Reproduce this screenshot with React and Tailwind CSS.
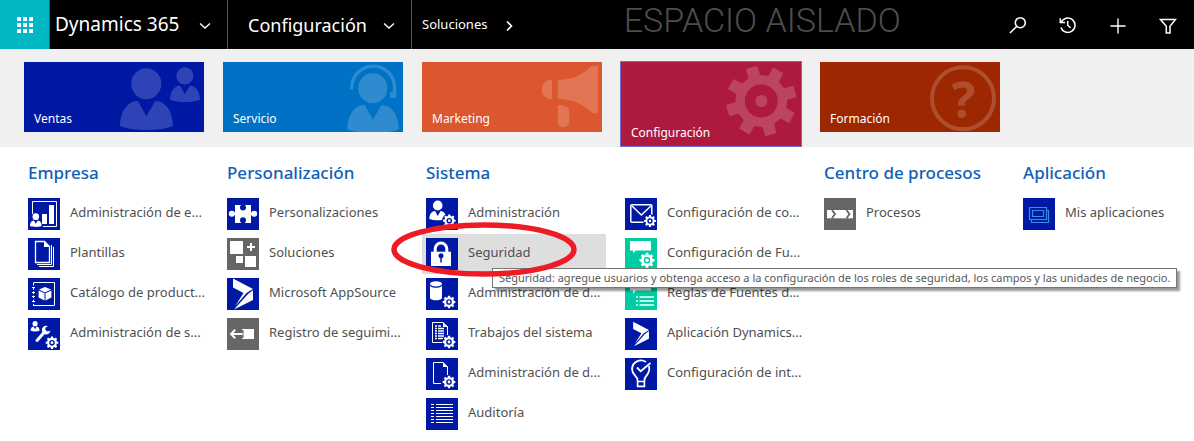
import React from "react";

function gearPath(cx, cy, outer, root, teeth, startDeg) {
  const step = (Math.PI * 2) / teeth;
  const start = (startDeg * Math.PI) / 180;
  const points = [];
  for (let i = 0; i < teeth; i++) {
    const a = start + i * step;
    const corners = [
      [root, a - step * 0.3],
      [outer, a - step * 0.21],
      [outer, a + step * 0.21],
      [root, a + step * 0.3],
    ];
    for (const [r, t] of corners) {
      points.push(`${(cx + r * Math.cos(t)).toFixed(2)} ${(cy + r * Math.sin(t)).toFixed(2)}`);
    }
  }
  return `M${points.join("L")}Z`;
}

function Gear({ cx = 23, cy = 24, r = 6.4, bg = "#0019a5" }) {
  return (
    <>
      <circle cx={cx} cy={cy} r={r + 0.8} fill={bg} />
      <path d={gearPath(cx, cy, r, r * 0.78, 8, -90)} fill="#fff" />
      <circle cx={cx} cy={cy} r={r * 0.33} fill="none" stroke={bg} strokeWidth="1.4" />
    </>
  );
}

const BODY = "M18 0L26.3 15.3L35.3 0C47 0 53 13 53 25C46 28 36 29 26.5 29C17 29 7 28 0 25C0 13 6 0 18 0Z";

function Person({ x, y, s }) {
  return (
    <g transform={`translate(${x} ${y}) scale(${s})`} fill="#fff">
      <ellipse cx="26.3" cy="-17.3" rx="15" ry="15.5" />
      <path d={BODY} />
    </g>
  );
}

const DynamicsLogo = () => (
  <g fill="#fff">
    <path d="M6 0.5L26 11L19.5 15L8 28.5L16.5 15L6 9.5Z" />
    <path d="M26 12.2V22L7 31.5L21 16Z" />
  </g>
);

const icons = {
  company: (
    <>
      <path d="M4.5 16V3.5H28.5V28.5H15" fill="none" stroke="#fff" />
      <path d="M14 16H19V26H14ZM21 7H26V26H21Z" fill="#fff" />
      <Person x={2} y={22.5} s={0.22} />
    </>
  ),
  templates: (
    <>
      <path d="M7.5 3.5H16.5L21.5 8.5V24.5H7.5Z" fill="none" stroke="#fff" strokeWidth="1.3" />
      <path d="M16 3L22 9H16Z" fill="#fff" />
      <path d="M23.5 7V26.5H9M25.5 9V28.5H11" fill="none" stroke="#fff" />
    </>
  ),
  catalog: (
    <>
      <path d="M5.5 4.5H26.5V27.5H5.5" fill="none" stroke="#fff" />
      <path d="M5.5 5V28" stroke="#fff" strokeDasharray="2.5 1.7" />
      <path d="M4 9.5H7M4 14.5H7M4 18.5H7M4 23.5H7" stroke="#fff" />
      <path d="M17 9L23 11.6L17 14.4L11 11.6ZM10.6 12.6L16.5 15.3V22.4L10.6 19.4ZM23.4 12.6L17.5 15.3V22.4L23.4 19.4Z" fill="#fff" />
    </>
  ),
  serviceAdmin: (
    <>
      <Person x={2.6} y={8.6} s={0.17} />
      <path d="M9 22.5L17 13.5" stroke="#fff" strokeWidth="3" strokeLinecap="round" />
      <path d="M20 8.2A4.3 4.3 0 1 0 22.4 12.8L19.4 13.6L17.3 12L17.6 9.6Z" fill="#fff" />
      <Gear cx={24} cy={24.7} />
    </>
  ),
  puzzle: (
    <>
      <path d="M8 7H24V25H8Z" fill="#fff" />
      <circle cx="4.8" cy="15.8" r="3" fill="#fff" />
      <circle cx="27.2" cy="15.8" r="3" fill="#fff" />
      <path d="M4 14.5H28V17H4Z" fill="#fff" />
      <path d="M14.8 6H17.2V8H14.8ZM14.8 24H17.2V26H14.8Z" fill="#0019a5" />
      <circle cx="16" cy="9.6" r="3" fill="#0019a5" />
      <circle cx="16" cy="22.2" r="3" fill="#0019a5" />
    </>
  ),
  solutions: (
    <path d="M3 3H16V16H3ZM9 18H16V25H9ZM18 18H29V29H18ZM23 5H25V8H28V10H25V13H23V10H20V8H23Z" fill="#fff" />
  ),
  dynamics: <DynamicsLogo />,
  dynamicsSmall: (
    <g transform="translate(3.4 3.4) scale(0.79)">
      <DynamicsLogo />
    </g>
  ),
  tracking: (
    <>
      <path d="M15 11H27V21H15Z" fill="#fff" />
      <path d="M12 12.7H15.8V19.3H12" fill="none" stroke="#666" strokeWidth="1.4" />
      <path d="M15.5 16H4.5M8.2 11.8L4 16L8.2 20.2" fill="none" stroke="#fff" strokeWidth="2" />
    </>
  ),
  admin: (
    <>
      <Person x={3.3} y={13} s={0.32} />
      <Gear cx={23.3} cy={22.7} />
    </>
  ),
  lock: (
    <>
      <path d="M9.2 15V10.8A5.8 5.8 0 0 1 20.8 10.8V15" fill="none" stroke="#fff" strokeWidth="3" />
      <path d="M5 13.7H25V28H5Z" fill="#fff" />
      <circle cx="15" cy="17.7" r="2.5" fill="#0019a5" />
      <path d="M14.3 18H15.8V24.5H14.3Z" fill="#0019a5" />
    </>
  ),
  database: (
    <>
      <ellipse cx="10" cy="5.8" rx="6" ry="2.6" fill="#fff" />
      <path d="M4 8C6 10.4 14 10.4 16 8V20.3C14 23 6 23 4 20.3Z" fill="#fff" />
      <Gear />
    </>
  ),
  jobs: (
    <>
      <path d="M6.5 4.5H17L21.5 9V24.5H6.5Z" fill="none" stroke="#fff" />
      <path d="M17 4L22 9H17Z" fill="#fff" />
      <path d="M9 8H11M12 8H15M9 10.5H11M12 10.5H18M9 13H11M12 13H18M9 15.5H11M12 15.5H18M9 18H11M12 18H18M9 20.5H11M12 20.5H18" stroke="#fff" strokeWidth="1.3" />
      <Gear />
    </>
  ),
  dataAdmin: (
    <>
      <path d="M15 25.5H7.5V4.5H17L21.5 9V18" fill="none" stroke="#fff" />
      <path d="M17 4L22 9H17Z" fill="#fff" />
      <Gear />
    </>
  ),
  audit: (
    <path
      d="M5 6.5H8M10 6.5H27M5 9.5H8M10 9.5H27M5 12.5H8M10 12.5H27M5 15.5H8M10 15.5H27M5 18.5H8M10 18.5H27M5 21.5H8M10 21.5H27M5 24.5H8M10 24.5H27"
      stroke="#fff"
    />
  ),
  email: (
    <>
      <rect x="5.8" y="6.8" width="21" height="17.5" rx="1" fill="none" stroke="#fff" strokeWidth="1.5" />
      <path d="M7 8L16.3 17L26 8" fill="none" stroke="#fff" strokeWidth="1.5" />
      <Gear cx={25} cy={23} r={6} />
    </>
  ),
  feedSettings: (
    <>
      <path d="M5 3H26V12.5H11L8 15V12.5H5Z" fill="#fff" />
      <Gear cx={22} cy={22.3} r={7.6} bg="#00cca3" />
    </>
  ),
  feedRules: (
    <>
      <path d="M5 3H26V12.5H11L8 15.5V12.5H5Z" fill="#fff" />
      <path d="M11 19H13M14.5 19H29M11 23H13M14.5 23H29M11 27H13M14.5 27H29" stroke="#fff" strokeWidth="1.6" />
    </>
  ),
  bulb: (
    <>
      <path d="M12.5 23V21.5C12.5 18.5 7 17 7 11A9 9 0 0 1 21 4M24 8C26 16 19.5 18 19.5 21.5V23" fill="none" stroke="#fff" strokeWidth="1.8" />
      <path d="M12 9.5L15.7 13.3L25.5 5" fill="none" stroke="#fff" strokeWidth="1.8" />
      <path d="M12.6 23.5H19.4V28.4H12.6Z" fill="none" stroke="#fff" strokeWidth="1.7" />
    </>
  ),
  processes: (
    <>
      <path d="M3 12H29V20.3H3Z" fill="#fff" />
      <path d="M8 12L11 16.1L8 20.3M22.5 12L25.5 16.1L22.5 20.3" fill="none" stroke="#666" strokeWidth="1.8" />
    </>
  ),
  apps: (
    <path d="M6.5 9.5H23.5V21.5H6.5ZM9.5 12.5H20.5V18.5H9.5ZM8.5 22V24.5H25.5V12.5H24" fill="none" stroke="#2f8fe0" strokeWidth="1.2" />
  ),
};

const iconBg = {
  blue: "bg-[#0019a5]",
  gray: "bg-[#666666]",
  green: "bg-[#00cca3]",
};

const tileArt = {
  sales: (
    <>
      <Person x={96} y={39} s={1} />
      <Person x={146} y={23.7} s={0.566} />
    </>
  ),
  service: (
    <>
      <Person x={124.3} y={43} s={0.97} />
      <path d="M128.8 27.5V25.5A21.4 21.4 0 0 1 171.6 25.5V30" fill="none" stroke="#fff" strokeWidth="3.4" />
      <path d="M167 30H173.3V36H167Z" fill="#fff" />
    </>
  ),
  marketing: (
    <path
      d="M135.7 17.7C152 17.7 162 12 169 4H176V51.3H170C162 42 150 37 135.7 37ZM130 17.7V37.3C123.5 37.3 119.7 33 119.7 27.5C119.7 22 123.5 17.7 130 17.7ZM135.7 42.7C140 43.3 147.3 44 147.3 49V59.5A5.8 5.8 0 0 1 135.7 59.5Z"
      fill="#fff"
    />
  ),
  settings: (
    <>
      <path
        d={`${gearPath(140.3, 39, 35.5, 26, 8, -106)}M156.8 39A16.5 16.5 0 1 0 123.8 39A16.5 16.5 0 1 0 156.8 39Z`}
        fillRule="evenodd"
        fill="#fff"
      />
      <circle cx="140.3" cy="39" r="6" fill="#fff" />
    </>
  ),
  training: (
    <>
      <circle cx="143" cy="36.3" r="31" fill="none" stroke="#fff" strokeWidth="4" />
      <text x="143.5" y="56" textAnchor="middle" fontSize="50" fontWeight="700" fontFamily="Open Sans, sans-serif" fill="#fff">
        ?
      </text>
    </>
  ),
};

const tiles = [
  { label: "Ventas", art: "sales", bg: "bg-[#0019a5]" },
  { label: "Servicio", art: "service", bg: "bg-[#0072c6]" },
  { label: "Marketing", art: "marketing", bg: "bg-[#dc562e]" },
  { label: "Configuración", art: "settings", bg: "bg-[#ae193e]", active: true },
  { label: "Formación", art: "training", bg: "bg-[#9c2700]" },
];

const sections = [
  {
    title: "Empresa",
    columns: [[
      ["Administración de e...", "company", "blue"],
      ["Plantillas", "templates", "blue"],
      ["Catálogo de product...", "catalog", "blue"],
      ["Administración de s...", "serviceAdmin", "blue"],
    ]],
  },
  {
    title: "Personalización",
    columns: [[
      ["Personalizaciones", "puzzle", "blue"],
      ["Soluciones", "solutions", "gray"],
      ["Microsoft AppSource", "dynamics", "blue"],
      ["Registro de seguimi...", "tracking", "gray"],
    ]],
  },
  {
    title: "Sistema",
    columns: [
      [
        ["Administración", "admin", "blue"],
        ["Seguridad", "lock", "blue"],
        ["Administración de d...", "database", "blue"],
        ["Trabajos del sistema", "jobs", "blue"],
        ["Administración de d...", "dataAdmin", "blue"],
        ["Auditoría", "audit", "blue"],
      ],
      [
        ["Configuración de co...", "email", "blue"],
        ["Configuración de Fu...", "feedSettings", "green"],
        ["Reglas de Fuentes d...", "feedRules", "green"],
        ["Aplicación Dynamics...", "dynamicsSmall", "blue"],
        ["Configuración de int...", "bulb", "blue"],
      ],
    ],
  },
  { title: "Centro de procesos", columns: [[["Procesos", "processes", "gray"]]] },
  { title: "Aplicación", columns: [[["Mis aplicaciones", "apps", "blue"]]] },
];

function ChevronDown() {
  return (
    <svg className="h-3 w-3" viewBox="0 0 12 12" fill="none" stroke="#fff" strokeWidth="1.4" aria-hidden="true">
      <path d="M1 4.5L6 9L11 4.5" />
    </svg>
  );
}

function TopBar() {
  return (
    <header className="flex h-[49px] bg-black text-white">
      <button aria-label="Aplicaciones" className="flex w-[49px] shrink-0 items-center justify-center bg-[#00b7c3]">
        <svg className="h-4 w-4" viewBox="0 0 16 16" fill="#fff" aria-hidden="true">
          <path d="M0 0H4V4H0ZM6 0H10V4H6ZM12 0H16V4H12ZM0 6H4V10H0ZM6 6H10V10H6ZM12 6H16V10H12ZM0 12H4V16H0ZM6 12H10V16H6ZM12 12H16V16H12Z" />
        </svg>
      </button>
      <button className="flex w-[179px] shrink-0 items-center justify-between border-x border-[#555] pr-4 pl-[5px] text-[19px] whitespace-nowrap">
        Dynamics 365
        <ChevronDown />
      </button>
      <button className="flex w-[184px] shrink-0 items-center justify-between border-r border-[#555] pr-4 pl-5 text-lg whitespace-nowrap">
        Configuración
        <ChevronDown />
      </button>
      <a href="#soluciones" className="flex shrink-0 items-center gap-4 pl-[10px] text-[13px]">
        Soluciones
        <svg className="h-3 w-3" viewBox="0 0 12 12" fill="none" stroke="#fff" strokeWidth="1.6" aria-hidden="true">
          <path d="M4 2.5L8.5 7L4 11.5" />
        </svg>
      </a>
      <p className="flex-1 text-center font-['Roboto',sans-serif] text-[34px] leading-10 font-light whitespace-nowrap text-[#4d4d4d]">
        ESPACIO AISLADO
      </p>
      <div className="flex shrink-0 items-center gap-8 pr-[17px]">
        <button aria-label="Buscar">
          <svg className="h-[18px] w-[18px]" viewBox="0 0 18 18" fill="none" stroke="#fff" strokeWidth="1.6" aria-hidden="true">
            <circle cx="11.3" cy="6.7" r="5" />
            <path d="M7.8 10.2L1 17" />
          </svg>
        </button>
        <button aria-label="Recientes">
          <svg className="h-[18px] w-[18px]" viewBox="0 0 18 18" fill="none" stroke="#fff" strokeWidth="1.5" aria-hidden="true">
            <path d="M2.2 6.4A7.2 7.2 0 1 1 2 11.5" />
            <path d="M1.3 2.2V6.6H6" />
            <path d="M8.7 5V9.2L11.6 12" />
          </svg>
        </button>
        <button aria-label="Crear">
          <svg className="h-[18px] w-[18px]" viewBox="0 0 18 18" fill="none" stroke="#fff" strokeWidth="1.4" aria-hidden="true">
            <path d="M9 2.5V17.5M1.5 10H16.5" />
          </svg>
        </button>
        <button aria-label="Filtrar">
          <svg className="h-[18px] w-[18px]" viewBox="0 0 18 18" fill="none" stroke="#fff" strokeWidth="1.5" aria-hidden="true">
            <path d="M1.5 3.5H16.5L11 10.3V17H7.3V10.3Z" />
          </svg>
        </button>
      </div>
    </header>
  );
}

function Tile({ label, art, bg, active }) {
  const size = active ? "h-[86px] w-[182px] -ml-px border border-[#6f6fd0]" : "mt-px h-[70px] w-[180px]";
  return (
    <a href={`#${art}`} className={`relative flex items-end px-[10px] pb-[3px] text-xs leading-5 text-white ${size} ${bg}`}>
      <svg className="absolute top-0 right-0 h-[76px] w-[100px] opacity-[0.18]" viewBox="80 0 100 76" aria-hidden="true">
        {tileArt[art]}
      </svg>
      {label}
    </a>
  );
}

function SecurityTooltip() {
  return (
    <>
      <span
        role="tooltip"
        className="absolute top-[34px] left-[70px] z-10 border border-[#767676] bg-white px-[6px] text-[11px] leading-[18px] whitespace-nowrap text-[#575757] shadow-[3px_3px_2px_rgba(0,0,0,0.4)]"
      >
        Seguridad: agregue usuarios y obtenga acceso a la configuración de los roles de seguridad, los campos y las unidades de negocio.
      </span>
      <svg className="pointer-events-none absolute -top-[14px] -left-8 z-20 h-[60px] w-[188px]" viewBox="0 0 188 60" fill="none" aria-hidden="true">
        <ellipse cx="94" cy="29.5" rx="90" ry="24.5" stroke="#ed1c24" strokeWidth="5.5" />
      </svg>
    </>
  );
}

function Item({ label, icon, color }) {
  const selected = label === "Seguridad";
  const state = selected ? "w-[184px] bg-[#dedede]" : "";
  return (
    <li>
      <a href={`#${icon}`} className={`relative flex h-10 items-center gap-[10px] pl-1 text-[13px] whitespace-nowrap text-[#505050] ${state}`}>
        <svg className={`h-8 w-8 shrink-0 ${iconBg[color]}`} viewBox="0 0 32 32" aria-hidden="true">
          {icons[icon]}
        </svg>
        <span className="pb-0.5">{label}</span>
        {selected && <SecurityTooltip />}
      </a>
    </li>
  );
}

export default function App() {
  return (
    <div className="min-h-screen bg-white font-['Noto_Sans','Open_Sans',sans-serif]">
      <TopBar />
      <nav className="grid grid-cols-6 bg-[#f0f0f0] pt-3">
        {tiles.map((tile) => (
          <div key={tile.label} className="h-[86px] pl-6">
            <Tile {...tile} />
          </div>
        ))}
      </nav>
      <main className="grid grid-cols-6 pt-3">
        {sections.map((section) => (
          <section key={section.title} className={section.columns.length > 1 ? "col-span-2" : ""}>
            <h2 className="pl-7 text-[17px] leading-7 font-medium whitespace-nowrap text-[#1160b7]">{section.title}</h2>
            <div className={`grid pt-[7px] ${section.columns.length > 1 ? "grid-cols-2" : ""}`}>
              {section.columns.map((items, index) => (
                <ul key={index} className="pl-6">
                  {items.map(([label, icon, color]) => (
                    <Item key={icon} label={label} icon={icon} color={color} />
                  ))}
                </ul>
              ))}
            </div>
          </section>
        ))}
      </main>
    </div>
  );
}
